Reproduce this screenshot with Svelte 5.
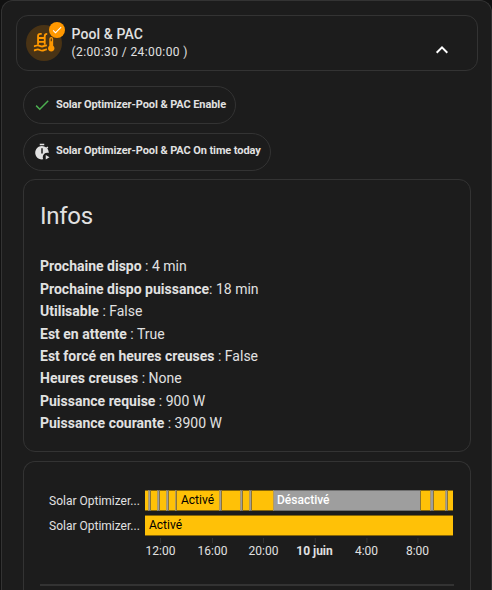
<script lang="ts">
	type Segment = { start: number; end: number; on: boolean; label?: string };

	const infos = [
		['Prochaine dispo', ' : 4 min'],
		['Prochaine dispo puissance', ': 18 min'],
		['Utilisable', ' : False'],
		['Est en attente', ' : True'],
		['Est forcé en heures creuses', ' : False'],
		['Heures creuses', ' : None'],
		['Puissance requise', ' : 900 W'],
		['Puissance courante', ' : 3900 W']
	];

	const chartWidth = 308;

	const rows: { name: string; segments: Segment[] }[] = [
		{
			name: 'Solar Optimizer...',
			segments: [
				{ start: 0, end: 3, on: true },
				{ start: 3, end: 6, on: false },
				{ start: 6, end: 12, on: true },
				{ start: 12, end: 15, on: false },
				{ start: 15, end: 21, on: true },
				{ start: 21, end: 24, on: false },
				{ start: 24, end: 30, on: true },
				{ start: 30, end: 32, on: false },
				{ start: 32, end: 74, on: true, label: 'Activé' },
				{ start: 74, end: 77, on: false },
				{ start: 77, end: 95, on: true },
				{ start: 95, end: 98, on: false },
				{ start: 98, end: 104, on: true },
				{ start: 104, end: 107, on: false },
				{ start: 107, end: 128, on: true },
				{ start: 128, end: 276, on: false, label: 'Désactivé' },
				{ start: 276, end: 285, on: true },
				{ start: 285, end: 289, on: false },
				{ start: 289, end: 300, on: true },
				{ start: 300, end: 303, on: false },
				{ start: 303, end: 308, on: true }
			]
		},
		{
			name: 'Solar Optimizer...',
			segments: [{ start: 0, end: 308, on: true, label: 'Activé' }]
		}
	];

	const ticks = [
		{ at: 15.5, label: '12:00' },
		{ at: 67.5, label: '16:00' },
		{ at: 118.5, label: '20:00' },
		{ at: 169.5, label: '10 juin', strong: true },
		{ at: 221.5, label: '4:00' },
		{ at: 272.5, label: '8:00' }
	];

	const percent = (value: number) => `${(value / chartWidth) * 100}%`;
</script>

<main class="panel">
	<header class="card header">
		<div class="avatar">
			<svg class="pool" viewBox="0 0 24 24">
				<path d="M1 15.500c1.700 0 2.400-1 4.200-1s2.600 1.300 4.700 1.300 2.700-1.300 5.300-1.300M1 20c1.700 0 2.400-1 4.200-1s2.600 1.300 4.700 1.300 2.700-1.300 5.300-1.300" />
				<path d="M5.500 14V4.500C5.500 2.800 6.500 2 8 2h1.500M12.800 14V4.500c0-1.700 1-2.500 2.700-2.500M5.500 6.500h7.300M5.500 10.700h7.300" />
				<path class="solid" fill-rule="evenodd" d="M17.800 15V7.500a2.100 2.100 0 0 1 4.200 0V15a3.500 3.500 0 1 1-4.200 0zm1.500-5h1.200V7.500a.6.6 0 0 0-1.200 0z" />
			</svg>
			<span class="badge">
				<svg viewBox="0 0 24 24"><path d="M21 7 9 19l-5.500-5.500 1.410-1.410L9 16.170 19.590 5.590 21 7z" /></svg>
			</span>
		</div>
		<div class="heading">
			<span class="name">Pool &amp; PAC</span>
			<span class="time">(2:00:30 / 24:00:00 )</span>
		</div>
		<svg class="chevron" viewBox="0 0 24 24"><path d="m6.700 14.700 5.300-5.300 5.300 5.300" /></svg>
	</header>

	<div class="content">
		<div class="chip">
			<svg class="check" viewBox="0 0 24 24"><path d="M21 7 9 19l-5.500-5.500 1.410-1.410L9 16.170 19.590 5.590 21 7z" /></svg>
			<span>Solar Optimizer-Pool &amp; PAC Enable</span>
		</div>
		<div class="chip timer">
			<svg viewBox="0 0 24 24">
				<path d="M15 3H9V1h6v2m-2 16c0-3.300 2.700-6 6-6 .700 0 1.400.130 2 .350V13c0-2.120-.740-4.070-1.970-5.610l1.420-1.420c-.450-.510-.900-.970-1.410-1.410L17.620 6A9 9 0 1 0 12 22c.590 0 1.160-.060 1.710-.170A6 6 0 0 1 13 19m0-5h-2V7h2v7m4 2v6l5-3-5-3z" />
			</svg>
			<span>Solar Optimizer-Pool &amp; PAC On time today</span>
		</div>

		<section class="card infos">
			<h1>Infos</h1>
			{#each infos as [label, value]}
				<p><b>{label}</b>{value}</p>
			{/each}
		</section>

		<section class="card history">
			{#each rows as row}
				<div class="row">
					<span class="rowName">{row.name}</span>
					<div class="timeline">
						{#each row.segments as segment}
							<div
								class="segment"
								class:on={segment.on}
								style:width={percent(segment.end - segment.start)}
							>
								{#if segment.label}
									<span class="state">{segment.label}</span>
								{/if}
							</div>
						{/each}
					</div>
				</div>
			{/each}
			<div class="axis">
				{#each ticks as tick}
					<span class="tick" class:strong={tick.strong} style:left={percent(tick.at)}>{tick.label}</span>
				{/each}
			</div>
			<hr />
		</section>
	</div>
</main>

<style>
	:global(body) {
		background: #111;
	}

	.panel {
		box-sizing: border-box;
		height: 590px;
		margin-left: 1px;
		padding: 14px 14px 0;
		border: 1px solid #333;
		border-bottom: 0;
		border-radius: 12px 12px 0 0;
		background: #1c1c1c;
		color: #e1e1e1;
		font-family: Roboto, sans-serif;
	}

	.card {
		box-sizing: border-box;
		border: 1px solid #333;
		border-radius: 12px;
	}

	.header {
		display: flex;
		align-items: center;
		width: 462px;
		height: 56px;
		padding: 0 23px 0 9px;
	}

	.avatar {
		position: relative;
		display: flex;
		align-items: center;
		justify-content: center;
		width: 36px;
		height: 36px;
		border-radius: 50%;
		background: #493315;
	}

	.pool {
		width: 22px;
		height: 22px;
		fill: none;
		stroke: #ff9800;
		stroke-width: 2;
	}

	.pool .solid {
		fill: #ff9800;
		stroke: none;
	}

	.badge {
		position: absolute;
		top: -3px;
		right: -3px;
		display: flex;
		align-items: center;
		justify-content: center;
		width: 16px;
		height: 16px;
		border-radius: 50%;
		background: #ff9800;
	}

	.badge svg {
		width: 12px;
		height: 12px;
		fill: #fff;
	}

	.heading {
		display: flex;
		flex-flow: column;
		flex: 1;
		margin-left: 9.5px;
		padding-bottom: 2px;
	}

	.name {
		font-size: 14px;
		font-weight: 500;
		line-height: 20px;
		letter-spacing: 0.1px;
	}

	.time {
		font-size: 12px;
		line-height: 16px;
		letter-spacing: 0.4px;
	}

	.chevron {
		width: 24px;
		height: 24px;
		margin-top: 13px;
		fill: none;
		stroke: #fff;
		stroke-width: 2;
	}

	.content {
		display: flex;
		flex-flow: column;
		align-items: flex-start;
		gap: 9px;
		padding: 15px 7px 0;
	}

	.chip {
		display: flex;
		align-items: center;
		box-sizing: border-box;
		height: 38px;
		padding: 0 9px;
		border: 1px solid #333;
		border-radius: 19px;
		font-size: 11px;
		font-weight: 700;
		letter-spacing: -0.09px;
		white-space: nowrap;
	}

	.chip svg {
		width: 18px;
		height: 18px;
		margin-right: 5px;
		fill: #e1e1e1;
	}

	.chip .check {
		fill: #4caf50;
	}

	.chip span {
		padding-bottom: 2px;
	}

	.timer span {
		padding-bottom: 4px;
	}

	.infos {
		width: 448px;
		height: 273px;
		margin-top: -1px;
		padding: 17px 16px 0;
	}

	h1 {
		margin: 0 0 20.4px;
		font-size: 24px;
		font-weight: 400;
		line-height: 38px;
		letter-spacing: -0.288px;
	}

	p {
		margin: 0;
		font-size: 14px;
		line-height: 22.4px;
	}

	.history {
		width: 448px;
		height: 129px;
		padding: 28px 16px 0;
		border-bottom: 0;
		border-radius: 12px 12px 0 0;
	}

	.row {
		display: flex;
		align-items: center;
		height: 21px;
		margin-bottom: 4px;
		font-size: 12px;
	}

	.rowName {
		box-sizing: border-box;
		width: 95px;
		padding-left: 9px;
		white-space: nowrap;
	}

	.timeline {
		display: flex;
		width: 308px;
		margin-left: 10px;
	}

	.segment {
		box-sizing: border-box;
		flex: none;
		height: 21px;
		border: 1px solid #6f6f6f;
		border-right-color: #8d7430;
		border-left-color: #b19a60;
		background: #9e9e9e;
		color: #fff;
		font-weight: 500;
		line-height: 18px;
	}

	.segment.on {
		border-width: 1px 0;
		border-color: #866508;
		background: #ffc107;
		color: #000;
		font-weight: 400;
	}

	.state {
		margin-left: 3px;
	}

	.on .state {
		margin-left: 4px;
	}

	.axis {
		position: relative;
		width: 308px;
		height: 44px;
		margin-left: 105px;
		font-size: 12px;
	}

	.tick {
		position: absolute;
		top: 4px;
		transform: translateX(-50%);
		white-space: nowrap;
	}

	.tick::before {
		content: '';
		position: absolute;
		top: -6px;
		left: 50%;
		width: 1px;
		height: 5px;
		background: #333;
	}

	.strong {
		font-weight: 700;
	}

	hr {
		height: 2px;
		margin: 0;
		border: 0;
		background: #333;
	}
</style>
